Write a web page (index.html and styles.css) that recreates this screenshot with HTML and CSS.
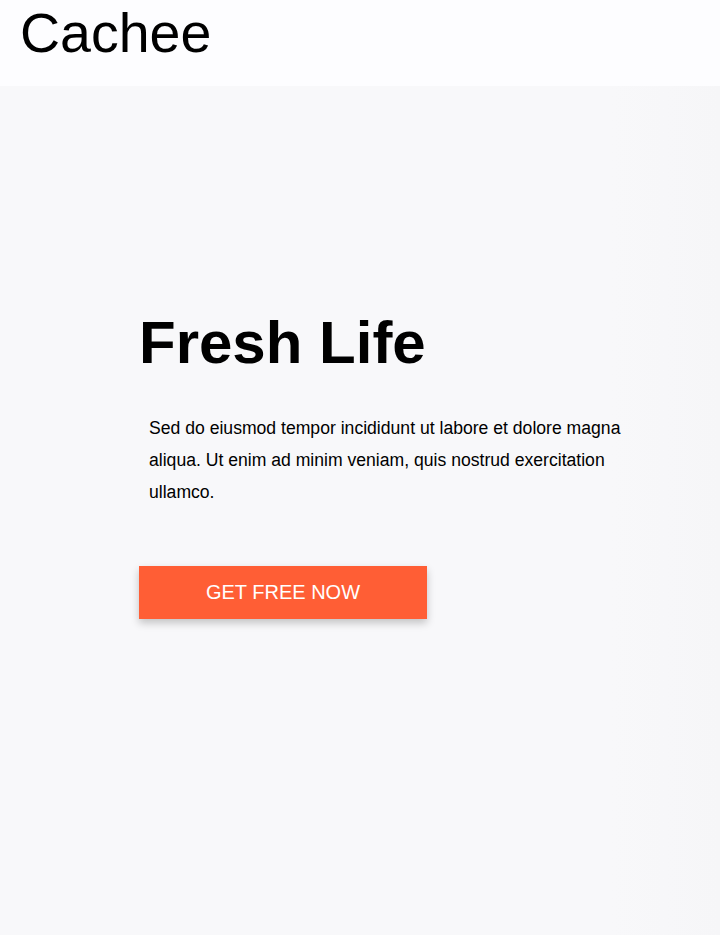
FILE: index.html
```html
<!DOCTYPE html>
<html lang="en">
<head>
<meta charset="utf-8">
<title>Cachee</title>
<link rel="stylesheet" href="styles.css">
</head>
<body>
<header class="site-header">
  <div class="brand">Cachee</div>
</header>
<main class="hero">
  <div class="hero-content">
    <h1 class="hero-title">Fresh Life</h1>
    <p class="hero-text">Sed do eiusmod tempor incididunt ut labore et dolore magna aliqua. Ut enim ad minim veniam, quis nostrud exercitation ullamco.</p>
    <a class="hero-button" href="#">GET FREE NOW</a>
  </div>
</main>
</body>
</html>
```
FILE: styles.css
```css
* { box-sizing: border-box; }
html, body { margin: 0; padding: 0; }
body {
  font-family: "Liberation Sans", Arial, sans-serif;
  color: #000;
  background: #f8f8fa;
}
.site-header {
  height: 86px;
  background: #fdfdff;
  padding: 0 20px;
}
.brand {
  font-size: 55.5px;
  line-height: 66px;
  font-weight: 400;
}
.hero {
  height: 849px;
  background: linear-gradient(90deg, #f8f8fa 0%, #f8f8fa 85%, #f6f6f8 100%);
  padding: 222px 0 0 139px;
}
.hero-content {
  width: 500px;
}
.hero-title {
  margin: 0;
  font-size: 60px;
  font-weight: 700;
  line-height: 69px;
}
.hero-text {
  margin: 35px 0 0;
  padding-left: 10px;
  font-size: 17.6px;
  line-height: 32px;
}
.hero-button {
  display: flex;
  align-items: center;
  justify-content: center;
  margin-top: 58px;
  width: 288px;
  height: 53px;
  background: #ff5e35;
  color: #fff;
  text-decoration: none;
  font-size: 20px;
  box-shadow: 0 4px 8px rgba(0,0,0,0.22);
}
```
